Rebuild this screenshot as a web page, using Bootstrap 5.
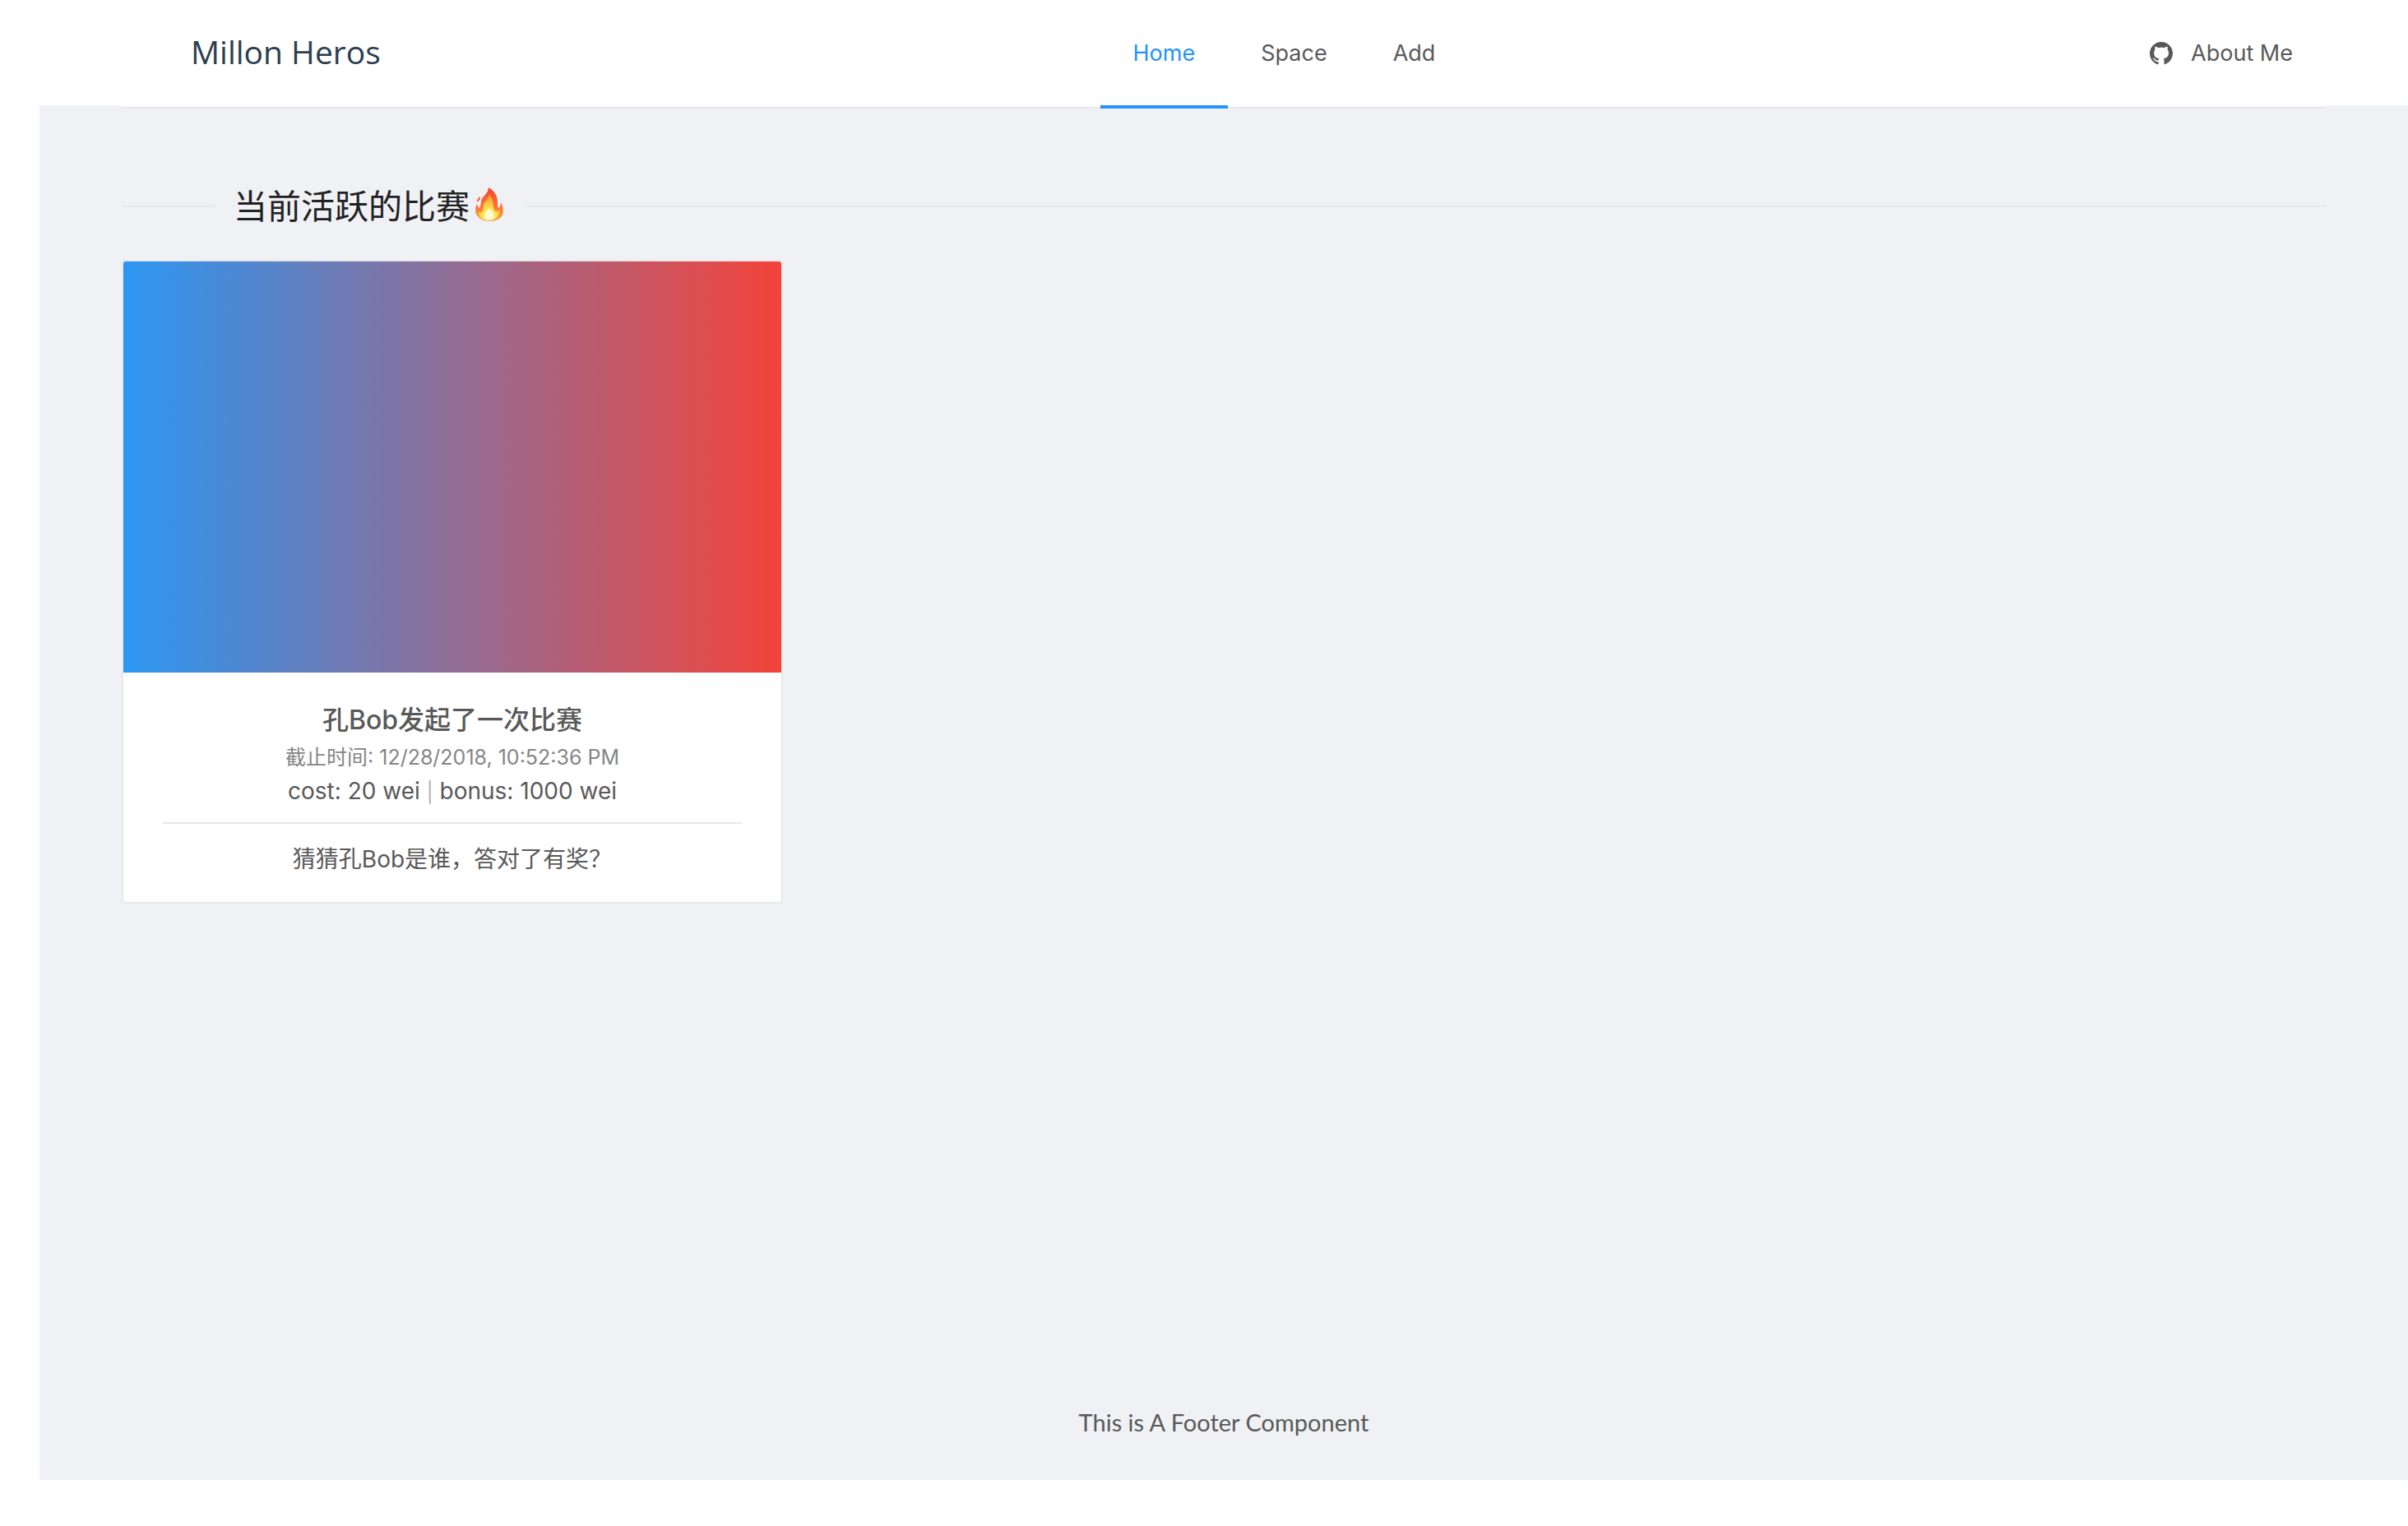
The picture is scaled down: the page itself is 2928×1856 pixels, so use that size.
<!DOCTYPE html>
<html lang="zh-CN">
<head>
<meta charset="utf-8">
<meta name="viewport" content="width=device-width, initial-scale=1">
<title>Millon Heros</title>
<link href="https://cdn.jsdelivr.net/npm/bootstrap@5.3.0/dist/css/bootstrap.min.css" rel="stylesheet">
<style>
  body {
    font-family: Inter, "Noto Sans CJK SC", sans-serif;
    font-size: 28px;
    line-height: 42px;
    color: #595959;
    background: #fff;
    padding-bottom: 56px;
  }
  .page-gutter { padding-left: 148px; padding-right: 100px; }
  .topbar { height: 128px; z-index: 1; }
  .topbar-inner {
    height: 132px;
    background: #fff;
    border-bottom: 2px solid #e8e8e8;
  }
  .brand {
    font-family: "Open Sans", sans-serif;
    font-size: 39px;
    line-height: 126px;
    color: #2c3e50;
    padding: 0 86px 0 84px;
  }
  .menu { margin-bottom: -2px; }
  .menu-link {
    display: flex;
    align-items: center;
    height: 132px;
    padding: 2px 40px 0;
    font-size: 27px;
    color: #595959;
    text-decoration: none;
    border-bottom: 4px solid transparent;
  }
  .menu-link:hover { color: #1890ff; }
  .menu-link.active { color: #2593fc; border-bottom-color: #2593fc; }
  .menu-icon { width: 28px; height: 28px; margin-right: 22px; }
  .canvas { margin-left: 48px; padding: 90px 100px 0; background: #f0f1f5; }
  .section-title { font-size: 41px; line-height: 66px; color: #222; font-weight: 400; }
  .section-title::before, .section-title::after {
    content: "";
    height: 2px;
    background: #e8e8e8;
  }
  .section-title::before { width: 114px; margin-right: 22px; }
  .section-title::after { flex: 1; margin-left: 28px; }
  .flame { width: 36px; height: 44px; margin-left: 6px; margin-bottom: 4px; }
  .game {
    width: 30%;
    margin-top: 32px;
    border: 2px solid #e8e8e8;
    border-radius: 4px;
    color: #595959;
  }
  .cover { aspect-ratio: 8 / 5; background: linear-gradient(90deg, #2b97f3, #f4433a); border-radius: 3px 3px 0 0; }
  .game-body { padding: 33px 48px 31px; }
  .game-title { font-size: 32px; line-height: 50px; font-weight: 500; }
  .deadline { font-size: 25px; line-height: 40px; color: #858585; }
  .sep { font-size: 24px; line-height: 1; color: #b8aaaa; }
  .rule { height: 2px; margin: 17px 0 22px; background: #e8e8e8; }
  .foot { font-family: Lato, sans-serif; font-size: 29px; padding: 0 0 49px; color: #595959; }
</style>
</head>
<body class="min-vh-100 d-flex flex-column">
<header class="topbar page-gutter position-relative">
  <nav class="topbar-inner d-flex justify-content-between" aria-label="Main">
    <a class="brand text-decoration-none" href="#">Millon Heros</a>
    <ul class="menu d-flex list-unstyled">
      <li><a class="menu-link active" aria-current="page" href="#home">Home</a></li>
      <li><a class="menu-link" href="#space">Space</a></li>
      <li><a class="menu-link" href="#add">Add</a></li>
    </ul>
    <a class="menu-link" href="#about">
      <svg class="menu-icon" viewBox="0 0 16 16" fill="currentColor" aria-hidden="true"><path d="M8 0C3.58 0 0 3.58 0 8c0 3.54 2.29 6.53 5.47 7.59.4.07.55-.17.55-.38 0-.19-.01-.82-.01-1.49-2.01.37-2.53-.49-2.69-.94-.09-.23-.48-.94-.82-1.13-.28-.15-.68-.52-.01-.53.63-.01 1.08.58 1.23.82.72 1.21 1.87.87 2.33.66.07-.52.28-.87.51-1.07-1.78-.2-3.64-.89-3.64-3.95 0-.87.31-1.59.82-2.15-.08-.2-.36-1.02.08-2.12 0 0 .67-.21 2.2.82.64-.18 1.32-.27 2-.27s1.36.09 2 .27c1.53-1.04 2.2-.82 2.2-.82.44 1.1.16 1.92.08 2.12.51.56.82 1.27.82 2.15 0 3.07-1.87 3.75-3.65 3.95.29.25.54.73.54 1.48 0 1.07-.01 1.93-.01 2.2 0 .21.15.46.55.38A8.01 8.01 0 0 0 16 8c0-4.42-3.58-8-8-8z"/></svg>
      About Me
    </a>
  </nav>
</header>

<div class="canvas flex-grow-1 d-flex flex-column">
  <main class="flex-grow-1">
    <h1 class="section-title d-flex align-items-center mb-0">当前活跃的比赛<svg class="flame" viewBox="0 0 36 44" role="img" aria-label="Fire">
        <defs>
          <linearGradient id="flameOuter" x1="0" y1="0" x2="0" y2="1">
            <stop offset="0" stop-color="#f0442e"/><stop offset=".55" stop-color="#fb7438"/><stop offset="1" stop-color="#fba23c"/>
          </linearGradient>
          <radialGradient id="flameInner" cx=".5" cy=".85" r=".75">
            <stop offset="0" stop-color="#fffbd0"/><stop offset=".4" stop-color="#ffe552"/><stop offset=".8" stop-color="#ffb43c"/><stop offset="1" stop-color="#ff9440"/>
          </radialGradient>
        </defs>
        <path fill="url(#flameOuter)" d="M17 1C24 5 28 11 28 19c0 3 0 5 1 7 2-1 3-4 3-7 3 6 4 12 1 17-3 4-9 6-15 6-7 0-12-3-15-7-3-5-2-10 0-14 1 2 1 4 3 5 1-3 2-5 2-8 1-7 9-9 9-17z"/>
        <path fill="#f0553c" d="M7 12c0 3-1 5-4 7 0-3 1-5 4-7z"/>
        <path fill="url(#flameInner)" d="M18 9c3 4 5 9 5 15 0 3 1 5 3 6 2 0 3-1 4-3 1 5 0 9-3 11-2 2-6 3-9 3-5 0-10-2-12-5-1-2-2-4-1-6 1 1 2 2 4 1 2-2 1-5 2-9 1-5 6-7 7-13z"/>
        <path fill="#fffbe0" opacity=".8" d="M18 26c2 3 6 6 6 10 0 3-3 5-6 5s-6-2-6-5c0-4 4-7 6-10z"/>
      </svg></h1>
    <article class="game bg-white text-center">
      <div class="cover"></div>
      <div class="game-body">
        <h2 class="game-title mb-0">孔Bob发起了一次比赛</h2>
        <div class="deadline">截止时间: 12/28/2018, 10:52:36 PM</div>
        <div>cost: 20 wei <span class="sep">|</span> bonus: 1000 wei</div>
        <div class="rule"></div>
        <p class="mb-0">猜猜孔Bob是谁，答对了有奖？</p>
      </div>
    </article>
  </main>
  <footer class="foot text-center">This is A Footer Component</footer>
</div>
<script src="https://cdn.jsdelivr.net/npm/bootstrap@5.3.0/dist/js/bootstrap.bundle.min.js"></script>
</body>
</html>
